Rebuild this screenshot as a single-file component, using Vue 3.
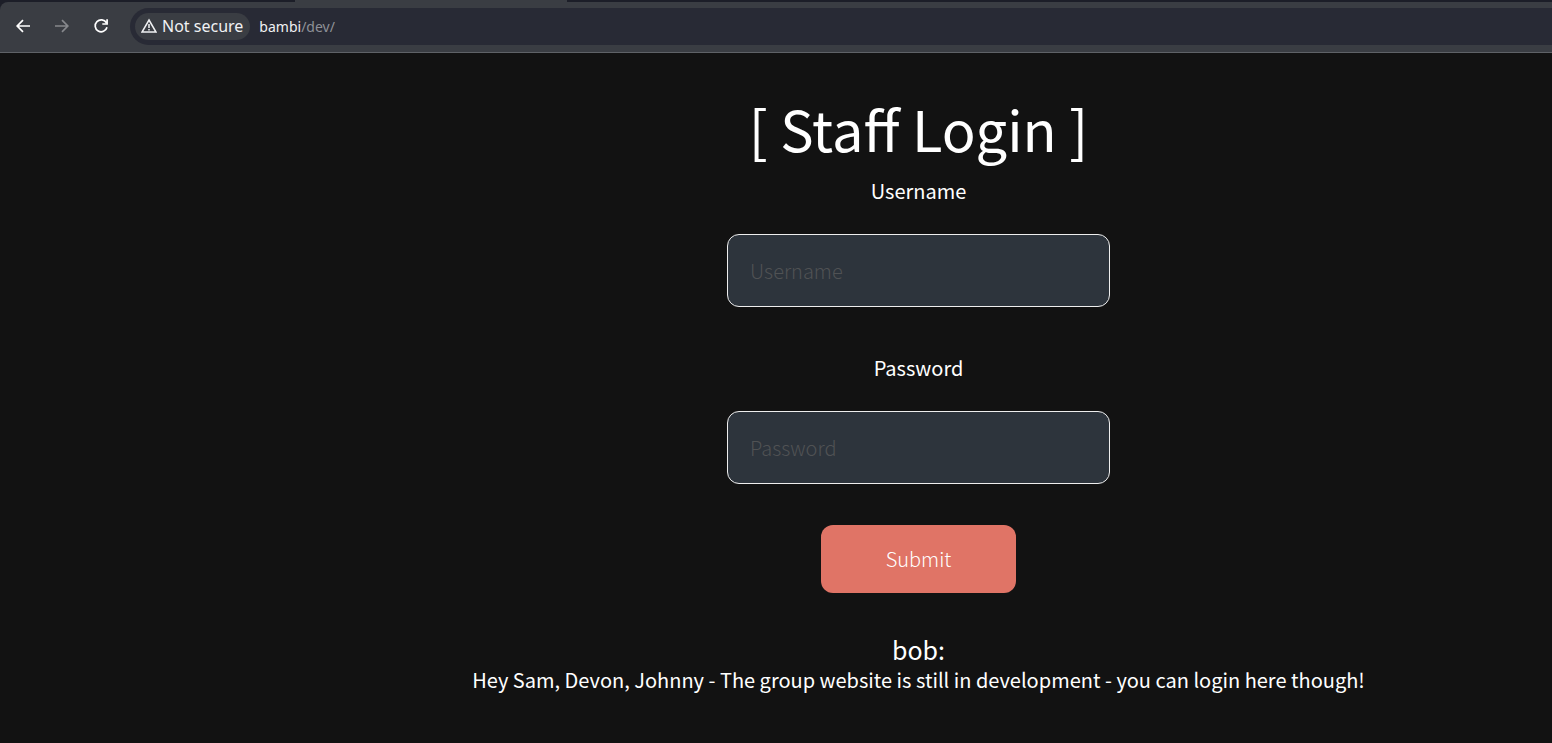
<script setup>
import { ref } from 'vue'

const username = ref('')
const password = ref('')
</script>

<template>
  <div class="window">
    <header class="chrome">
      <div class="tabstrip"><div class="tab"></div></div>
      <nav class="toolbar" aria-label="Browser">
        <button class="nav" type="button" aria-label="Back">
          <svg viewBox="0 0 16 16"><path d="M15 8H2.4M8 2.2L2.2 8L8 13.8" /></svg>
        </button>
        <button class="nav off" type="button" aria-label="Forward" disabled>
          <svg viewBox="0 0 16 16"><path d="M1 8H13.6M8 2.2L13.8 8L8 13.8" /></svg>
        </button>
        <button class="nav" type="button" aria-label="Reload">
          <svg viewBox="0 0 16 16"><path d="M13.4 4.8A6 6 0 1 0 14 9.3M14.1 1.2V6H9.3" /></svg>
        </button>
        <div class="omnibox">
          <button class="security" type="button">
            <svg viewBox="0 0 16 16"><path d="M8 2L15 14H1Z" /><path d="M8 6V10M8 11V12.6" /></svg>
            <span>Not secure</span>
          </button>
          <span class="url">bambi<span class="path">/dev/</span></span>
        </div>
      </nav>
    </header>

    <main class="page">
      <h1>[ Staff Login ]</h1>
      <form class="login" @submit.prevent>
        <label for="username">Username</label>
        <input id="username" v-model="username" type="text" placeholder="Username" />
        <label for="password">Password</label>
        <input id="password" v-model="password" type="password" placeholder="Password" />
        <button class="submit" type="submit">Submit</button>
      </form>
      <h2>bob:</h2>
      <p>Hey Sam, Devon, Johnny - The group website is still in development - you can login here though!</p>
    </main>
  </div>
</template>

<style>
body {
  margin: 0;
  background: #121212;
}
</style>

<style scoped>
.window {
  min-height: 100vh;
  background: #121212;
  color: #fff;
  font-family: "Noto Sans CJK JP", "Noto Sans", sans-serif;
}
.chrome {
  background: #1c1e28;
  border-bottom: 1px solid #5f6267;
  font-family: "Noto Sans", sans-serif;
}
.tabstrip {
  height: 2px;
  padding-left: 295px;
}
.tab {
  width: 272px;
  height: 2px;
  background: #3a3d43;
}
.toolbar {
  display: flex;
  align-items: center;
  height: 50px;
  box-sizing: border-box;
  padding: 0 0 2px 15px;
  background: #3a3d43;
  border-top-left-radius: 8px;
}
.nav {
  display: flex;
  width: 16px;
  height: 16px;
  margin-right: 23px;
  padding: 0;
  border: 0;
  background: none;
  color: #fff;
}
.nav.off {
  color: #86888c;
}
svg {
  width: 16px;
  height: 16px;
  fill: none;
  stroke: currentColor;
  stroke-width: 1.7;
}
.omnibox {
  display: flex;
  flex: 1;
  align-items: center;
  gap: 9px;
  height: 37px;
  box-sizing: border-box;
  margin-left: -2px;
  padding-left: 5px;
  background: #282a35;
  border-radius: 19px 0 0 19px;
}
.security {
  display: flex;
  align-items: center;
  gap: 5px;
  height: 27px;
  padding: 0 7px 0 6px;
  border: 0;
  border-radius: 14px;
  background: #3a3d43;
  color: #f0f1f3;
  font: 16px/27px "Noto Sans", sans-serif;
}
.security svg {
  stroke-width: 1.5;
}
.url {
  color: #f0f1f3;
  font: 14px/27px "Noto Sans", sans-serif;
}
.path {
  color: #8f9197;
}
.page {
  display: flex;
  flex-direction: column;
  align-items: center;
  padding: 32px 0 44px 285px;
}
h1 {
  margin: 0 0 4px;
  font-size: 56px;
  font-weight: 400;
  line-height: 86px;
}
.login {
  display: flex;
  flex-direction: column;
  align-items: center;
}
label {
  font-size: 20px;
  line-height: 32px;
}
input {
  width: 383px;
  height: 73px;
  box-sizing: border-box;
  margin: 27px 0 45px;
  padding: 0 22px;
  border: 1px solid #eee;
  border-radius: 12px;
  background: #2d343c;
  color: #fff;
  font-family: inherit;
  font-size: 20px;
  font-weight: 300;
}
input::placeholder {
  color: #505254;
  opacity: 1;
}
.submit {
  width: 195px;
  height: 68px;
  margin: -4px 0 40px;
  padding: 0 0 2px;
  border: 0;
  border-radius: 12px;
  background: #e07466;
  color: #fff;
  font-family: inherit;
  font-size: 20px;
  font-weight: 300;
}
h2 {
  margin: 0;
  font-size: 25px;
  font-weight: 400;
  line-height: 32px;
}
p {
  margin: 0;
  font-size: 20px;
  line-height: 30px;
}
</style>
